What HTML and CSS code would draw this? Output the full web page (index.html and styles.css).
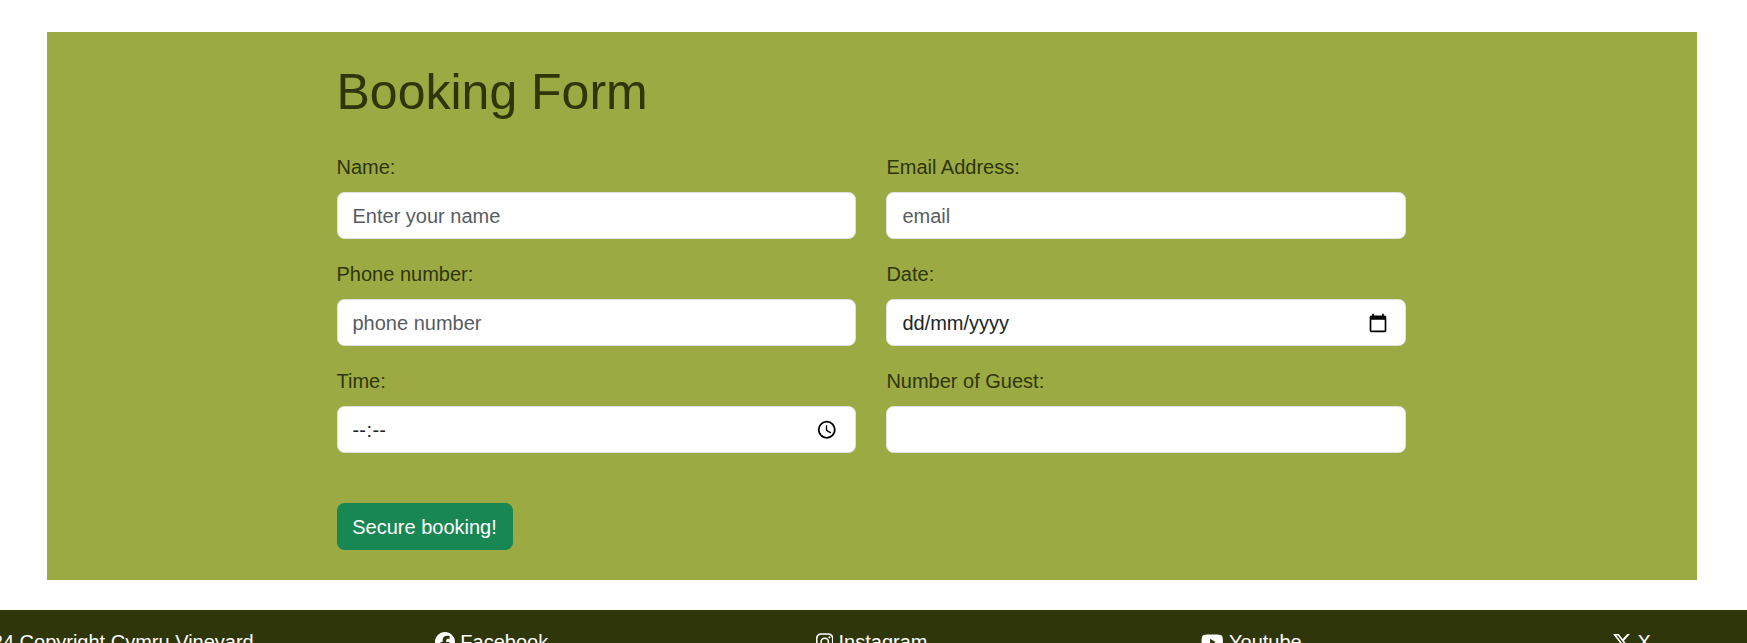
FILE: index.html
```html
<!DOCTYPE html>
<html lang="en">
<head>
<meta charset="utf-8">
<title>Booking Form</title>
<link rel="stylesheet" href="styles.css">
</head>
<body>
<main class="booking">
  <h1 class="title">Booking Form</h1>
  <form class="form">
    <div class="fields">
      <div class="field"><label class="label" for="name">Name:</label><input class="control" id="name" type="text" placeholder="Enter your name"></div>
      <div class="field"><label class="label" for="email">Email Address:</label><input class="control" id="email" type="email" placeholder="email"></div>
      <div class="field"><label class="label" for="phone">Phone number:</label><input class="control" id="phone" type="tel" placeholder="phone number"></div>
      <div class="field"><span class="label">Date:</span>
        <div class="control picker"><span>dd/mm/yyyy</span>
          <svg class="picker-icon" viewBox="0 0 24 24"><path d="M20 3h-1V1h-2v2H7V1H5v2H4c-1.100 0-2 .9-2 2v16c0 1.100.9 2 2 2h16c1.100 0 2-.9 2-2V5c0-1.100-.9-2-2-2zm0 18H4V8h16v13z"/></svg></div></div>
      <div class="field"><span class="label">Time:</span>
        <div class="control picker"><span class="time"><span>--</span><span>:</span><span>--</span></span>
          <svg class="picker-icon clock" viewBox="0 0 24 24"><path d="M12 2a10 10 0 1 0 0 20 10 10 0 0 0 0-20zm0 18a8 8 0 1 1 0-16 8 8 0 0 1 0 16zm.5-13H11v6l5.200 3.200.8-1.300-4.500-2.700z"/></svg></div></div>
      <div class="field"><label class="label" for="guests">Number of Guest:</label><input class="control" id="guests" type="text"></div>
    </div>
    <button class="submit" type="button">Secure booking!</button>
  </form>
</main>
<footer class="footer">
  <div class="footer-row">
    <span class="item copyright">© 2024 Copyright Cymru Vineyard</span>
    <span class="item"><svg class="icon" width="20" height="20" viewBox="0 0 512 512"><path d="M512 256C512 114.600 397.400 0 256 0S0 114.600 0 256c0 120 82.700 220.800 194.200 248.500V334.200h-52.800V256h52.800v-33.700c0-87.100 39.400-127.500 125-127.500 16.200 0 44.200 3.200 55.700 6.400V172c-6-.6-16.500-1-29.600-1-42 0-58.200 15.900-58.200 57.200V256h83.600l-14.400 78.200h-69.300v175.900C413.800 494.800 512 386.900 512 256z"/></svg> Facebook</span>
    <span class="item"><svg class="icon" width="17.5" height="20" viewBox="0 0 448 512"><path fill-rule="evenodd" d="M130 32h188c72 0 130 58 130 130v188c0 72-58 130-130 130H130C58 480 0 422 0 350V162C0 90 58 32 130 32zm4 40c-52 0-94 42-94 94v180c0 52 42 94 94 94h180c52 0 94-42 94-94V166c0-52-42-94-94-94zm90 69a115 115 0 1 1 0 230 115 115 0 0 1 0-230zm0 40a75 75 0 1 0 0 150 75 75 0 0 0 0-150zM343.500 110a27 27 0 1 1 0 54 27 27 0 0 1 0-54z"/></svg> Instagram</span>
    <span class="item"><svg class="icon" width="22.5" height="20" viewBox="0 0 576 512"><path d="M549.700 124.100c-6.300-23.700-24.800-42.300-48.300-48.600C458.800 64 288 64 288 64S117.200 64 74.600 75.500c-23.500 6.300-42 24.900-48.300 48.600C14.900 167 14.900 256.400 14.900 256.400s0 89.400 11.400 132.300c6.300 23.700 24.800 41.500 48.300 47.800C117.200 448 288 448 288 448s170.800 0 213.400-11.500c23.500-6.300 42-24.200 48.300-47.800 11.400-42.900 11.400-132.300 11.400-132.300s0-89.400-11.400-132.300zM232.100 337.600V175.200l142.700 81.200z"/></svg> Youtube</span>
    <span class="item"><svg class="icon" width="20" height="20" viewBox="0 0 512 512"><path d="M389.200 48h70.600L305.600 224.200 487 464H345L233.700 318.600 106.500 464H35.800L200.700 275.500 26.800 48H172.400L272.900 180.900zM364.400 421.800h39.100L151.100 88h-42z"/></svg> X</span>
  </div>
</footer>
</body>
</html>
```
FILE: styles.css
```css
* { box-sizing: border-box; }
html { overflow: hidden; }
body {
  display: flex;
  flex-direction: column;
  margin: 0;
  height: 643px;
  overflow: hidden;
  background: #fff;
  color: #2e360a;
  font: 20px/30px "Liberation Sans", Arial, sans-serif;
}
.booking {
  flex: none;
  width: 1650px;
  height: 548px;
  margin: 32px 0 30px 47px;
  padding: 30px 290px 30px 289.5px;
  background: #9caa43;
}
.title {
  margin: 0 0 30px;
  font-size: 50px;
  line-height: 60px;
  font-weight: 400;
}
.form { display: block; }
.fields {
  display: grid;
  grid-template-columns: 519px 519.8px;
  gap: 20px 30.9px;
}
.field {
  display: flex;
  flex-direction: column;
  gap: 10px;
}
.control {
  width: 100%;
  height: 47px;
  padding: 8px 15px 6px;
  border: 1px solid #dee2e6;
  border-radius: 7.5px;
  background: #fff;
  color: #212529;
  font: inherit;
}
.control::placeholder { color: #595c5f; opacity: 1; }
.picker {
  display: flex;
  align-items: center;
  justify-content: space-between;
  padding: 7px 15px;
}
.picker-icon {
  width: 20px;
  height: 20px;
  margin-right: 2px;
  fill: #000;
}
.clock {
  width: 21.5px;
  height: 21.5px;
  margin-right: 2.5px;
}
.time { display: flex; gap: 0.6px; }
.submit {
  display: block;
  width: 176px;
  height: 47px;
  margin-top: 50px;
  padding: 0;
  border: 0;
  border-radius: 7.5px;
  background: #198754;
  color: #fff;
  font: inherit;
}
.footer {
  flex: 1;
  min-height: 0;
  overflow: hidden;
  background: #2e360a;
  color: #fff;
}
.footer-row {
  display: grid;
  grid-template-columns: repeat(5, 380px);
  margin-left: -78.5px;
  padding-top: 17px;
}
.item { text-align: center; white-space: nowrap; }
.copyright { padding-right: 20px; }
.icon { fill: #fff; vertical-align: -2.5px; }
```
